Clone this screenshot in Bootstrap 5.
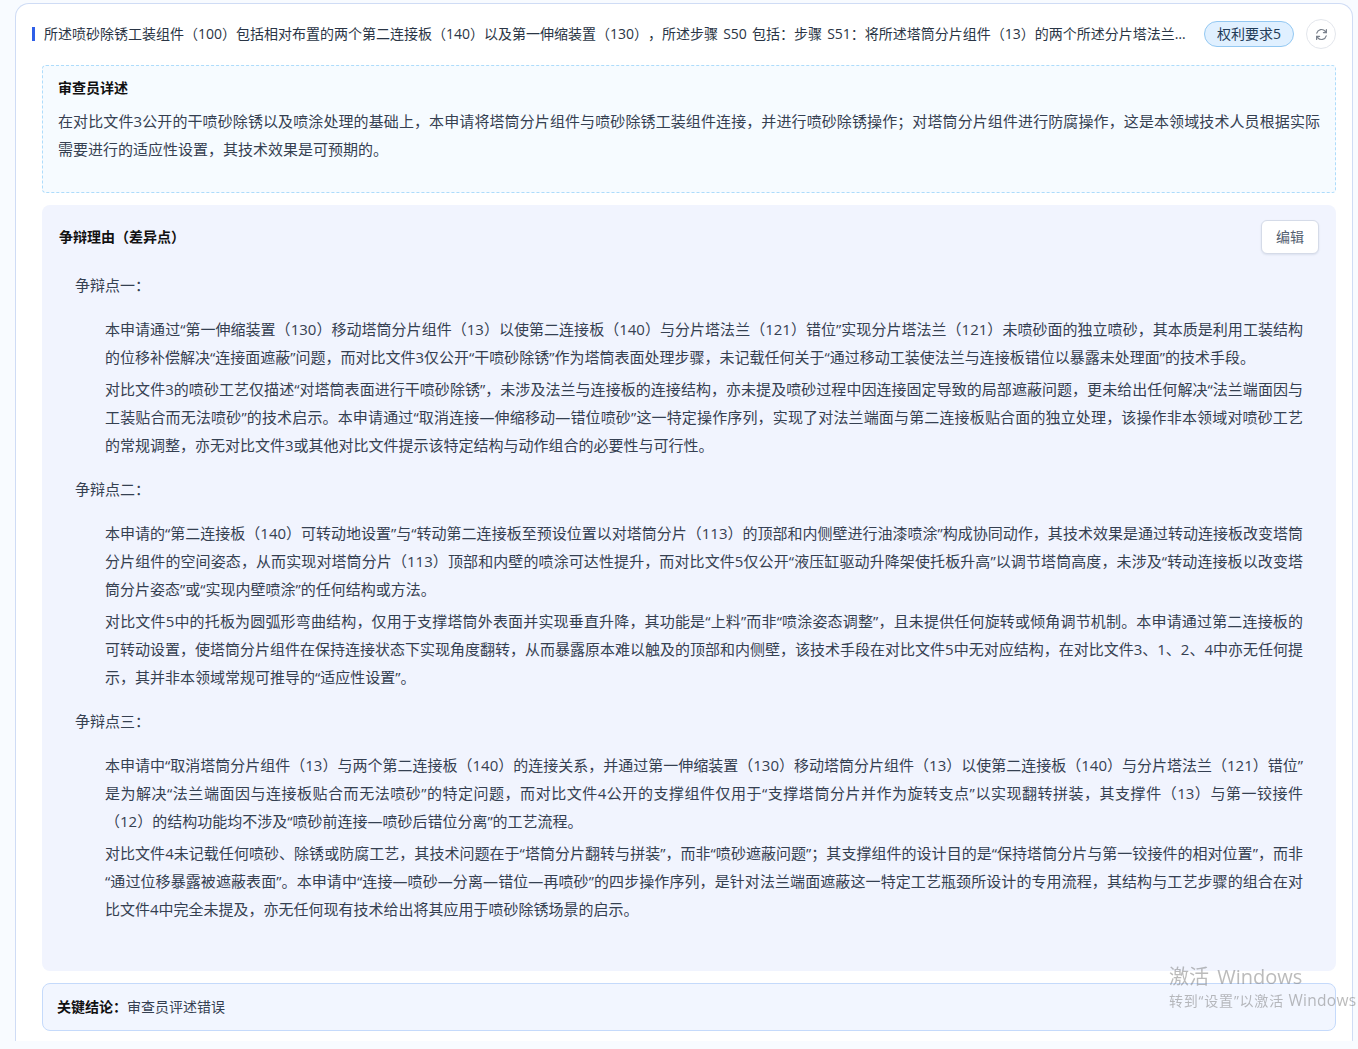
<!DOCTYPE html>
<html lang="zh-CN">
<head>
<meta charset="utf-8">
<title>权利要求5</title>
<link href="https://cdn.jsdelivr.net/npm/bootstrap@5.3.0/dist/css/bootstrap.min.css" rel="stylesheet">
<style>
html, body { height: 1049px; overflow: hidden; }
body { background: #f8fbff; font-family: "Open Sans", "Noto Sans CJK SC", sans-serif; font-size: 14px; color: #354051; padding: 3px 5px 8px 15px; text-spacing-trim: space-all; font-feature-settings: "chws" 0, "halt" 0, "palt" 0; }
.sheet { height: 1038px; background: #fff; border: 1px solid #cfdcf5; border-bottom: 0; border-radius: 14px 14px 0 0; padding: 15px 16px 0 16px; }
.head-row { height: 30px; margin-bottom: 16px; }
.mark-bar { width: 3px; height: 14px; background: #2f5fe8; flex: none; margin-right: 9px; }
.head-text { color: #2a3545; line-height: 28px; word-spacing: 1.5px; }
.claim-pill { background: #e0f0ff; border: 1px solid #93c8f2; color: #1f3b57; height: 26px; line-height: 24px; width: 90px; border-radius: 13px; text-align: center; margin: 0 12px 0 16px; flex: none; }
.round-btn { width: 30px; height: 30px; border-radius: 50%; border: 1px solid #e3e6ec; background: #fff; padding: 0; flex: none; }
.body-stack { margin-left: 10px; }
.note-box { background: #f6fbff; border: 1px dashed #aedcfb; border-radius: 4px; height: 128px; padding: 8px 15px; margin-bottom: 12px; }
.box-title { color: #111; font-weight: 700; font-size: 14px; line-height: 28px; }
.note-box p { font-size: 15px; line-height: 28px; margin: 5px 0 0; text-align: justify; }
.reason-box { background: #f1f4fe; border-radius: 8px; height: 766px; padding: 15px 17px 0; margin-bottom: 12px; font-size: 15px; }
.reason-head { height: 34px; margin-bottom: 17px; }
.edit-btn { width: 58px; height: 34px; padding: 0 0 2px; background: #fff; border: 1px solid #d5dbe8; border-radius: 6px; color: #556070; font-size: 14px; box-shadow: 0 1px 2px rgba(60,80,120,.12); }
.point-title { padding-left: 16px; line-height: 28px; margin: 0 0 16px; }
.point-para { padding: 0 16px 0 46px; line-height: 28px; margin: 0 0 4px; text-align: justify; }
.point-para.last-para { margin-bottom: 16px; }
.verdict-box { background: #f2f6ff; border: 1px solid #c5dafb; border-radius: 8px; height: 48px; padding: 0 14px; line-height: 46px; font-size: 14px; }
.verdict-box b { color: #111; }
.win-mark { position: fixed; left: 1169px; top: 964px; color: rgba(120,120,120,.5); white-space: nowrap; pointer-events: none; }
.win-big { font-size: 20px; line-height: 26px; word-spacing: 3px; }
.win-small { font-size: 14px; line-height: 20px; letter-spacing: .8px; }
.win-small span { font-size: 15.5px; letter-spacing: .3px; }
</style>
</head>
<body>
<div class="sheet">
  <div class="head-row d-flex align-items-center">
    <span class="mark-bar"></span>
    <div class="head-text text-truncate flex-grow-1">所述喷砂除锈工装组件（100）包括相对布置的两个第二连接板（140）以及第一伸缩装置（130），所述步骤 S50 包括：步骤 S51：将所述塔筒分片组件（13）的两个所述分片塔法兰（121）分别与两个所述第二连接板（140）连接</div>
    <span class="claim-pill">权利要求5</span>
    <button class="round-btn btn d-flex align-items-center justify-content-center" aria-label="刷新">
      <svg width="13" height="13" viewBox="0 0 16 16" fill="none" stroke="#7b828d" stroke-width="1.5" stroke-linecap="round" stroke-linejoin="round"><path d="M2.2 6.4A6 6 0 0 1 12.6 4l1.4 1.6"/><path d="M14 2v3.6h-3.6"/><path d="M13.8 9.6A6 6 0 0 1 3.4 12L2 10.4"/><path d="M2 14v-3.6h3.6"/></svg>
    </button>
  </div>

  <div class="body-stack">
  <div class="note-box">
    <div class="box-title">审查员详述</div>
    <p>在对比文件3公开的干喷砂除锈以及喷涂处理的基础上，本申请将塔筒分片组件与喷砂除锈工装组件连接，并进行喷砂除锈操作；对塔筒分片组件进行防腐操作，这是本领域技术人员根据实际需要进行的适应性设置，其技术效果是可预期的。</p>
  </div>

  <div class="reason-box">
    <div class="reason-head d-flex justify-content-between align-items-center">
      <div class="box-title">争辩理由（差异点）</div>
      <button class="edit-btn btn">编辑</button>
    </div>
    <p class="point-title">争辩点一：</p>
    <p class="point-para">本申请通过“第一伸缩装置（130）移动塔筒分片组件（13）以使第二连接板（140）与分片塔法兰（121）错位”实现分片塔法兰（121）未喷砂面的独立喷砂，其本质是利用工装结构的位移补偿解决“连接面遮蔽”问题，而对比文件3仅公开“干喷砂除锈”作为塔筒表面处理步骤，未记载任何关于“通过移动工装使法兰与连接板错位以暴露未处理面”的技术手段。</p>
    <p class="point-para last-para">对比文件3的喷砂工艺仅描述“对塔筒表面进行干喷砂除锈”，未涉及法兰与连接板的连接结构，亦未提及喷砂过程中因连接固定导致的局部遮蔽问题，更未给出任何解决“法兰端面因与工装贴合而无法喷砂”的技术启示。本申请通过“取消连接—伸缩移动—错位喷砂”这一特定操作序列，实现了对法兰端面与第二连接板贴合面的独立处理，该操作非本领域对喷砂工艺的常规调整，亦无对比文件3或其他对比文件提示该特定结构与动作组合的必要性与可行性。</p>
    <p class="point-title">争辩点二：</p>
    <p class="point-para">本申请的“第二连接板（140）可转动地设置”与“转动第二连接板至预设位置以对塔筒分片（113）的顶部和内侧壁进行油漆喷涂”构成协同动作，其技术效果是通过转动连接板改变塔筒分片组件的空间姿态，从而实现对塔筒分片（113）顶部和内壁的喷涂可达性提升，而对比文件5仅公开“液压缸驱动升降架使托板升高”以调节塔筒高度，未涉及“转动连接板以改变塔筒分片姿态”或“实现内壁喷涂”的任何结构或方法。</p>
    <p class="point-para last-para">对比文件5中的托板为圆弧形弯曲结构，仅用于支撑塔筒外表面并实现垂直升降，其功能是“上料”而非“喷涂姿态调整”，且未提供任何旋转或倾角调节机制。本申请通过第二连接板的可转动设置，使塔筒分片组件在保持连接状态下实现角度翻转，从而暴露原本难以触及的顶部和内侧壁，该技术手段在对比文件5中无对应结构，在对比文件3、1、2、4中亦无任何提示，其并非本领域常规可推导的“适应性设置”。</p>
    <p class="point-title">争辩点三：</p>
    <p class="point-para">本申请中“取消塔筒分片组件（13）与两个第二连接板（140）的连接关系，并通过第一伸缩装置（130）移动塔筒分片组件（13）以使第二连接板（140）与分片塔法兰（121）错位”是为解决“法兰端面因与连接板贴合而无法喷砂”的特定问题，而对比文件4公开的支撑组件仅用于“支撑塔筒分片并作为旋转支点”以实现翻转拼装，其支撑件（13）与第一铰接件（12）的结构功能均不涉及“喷砂前连接—喷砂后错位分离”的工艺流程。</p>
    <p class="point-para">对比文件4未记载任何喷砂、除锈或防腐工艺，其技术问题在于“塔筒分片翻转与拼装”，而非“喷砂遮蔽问题”；其支撑组件的设计目的是“保持塔筒分片与第一铰接件的相对位置”，而非“通过位移暴露被遮蔽表面”。本申请中“连接—喷砂—分离—错位—再喷砂”的四步操作序列，是针对法兰端面遮蔽这一特定工艺瓶颈所设计的专用流程，其结构与工艺步骤的组合在对比文件4中完全未提及，亦无任何现有技术给出将其应用于喷砂除锈场景的启示。</p>
  </div>

  <div class="verdict-box"><b>关键结论：</b>审查员评述错误</div>
  </div>
</div>
<div class="win-mark">
  <div class="win-big">激活 Windows</div>
  <div class="win-small">转到“设置”以激活 <span>Windows</span></div>
</div>
<script src="https://cdn.jsdelivr.net/npm/bootstrap@5.3.0/dist/js/bootstrap.bundle.min.js"></script>
</body>
</html>
